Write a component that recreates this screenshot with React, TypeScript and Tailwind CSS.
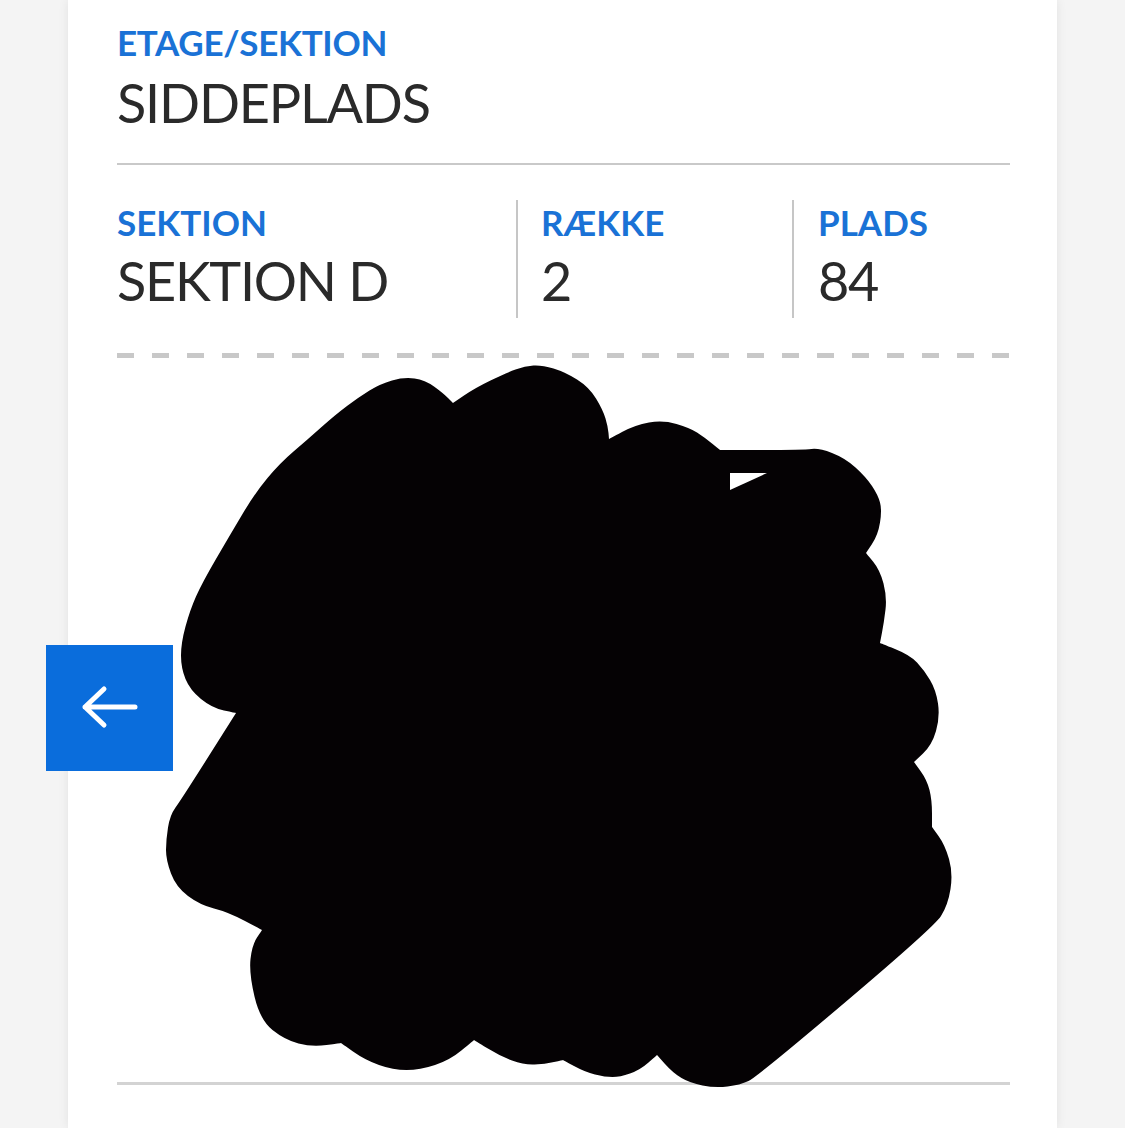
import { ReactNode } from 'react'

// outline of the marker scribble; sharp = notch between two strokes
type Pt = [number, number, boolean?]

const blob: Pt[] = [
  [181, 643], [190, 610], [202, 583], [230, 535], [255, 493], [280, 463], [307, 440], [335, 415],
  [359, 397], [380, 384], [404, 377], [425, 380], [443, 393], [453, 403, true],
  [475, 388], [506, 373], [525, 366], [542, 365], [565, 372], [589, 387], [603, 410], [608, 427], [609, 439, true],
  [635, 425], [663, 420], [690, 428], [704, 437], [720, 450, true],
  [804, 450], [819, 448], [845, 458], [866, 477], [878, 495], [882, 510], [878, 535], [866, 553, true],
  [880, 570], [887, 597], [884, 622], [880, 643, true],
  [910, 655], [924, 670], [936, 690], [940, 717], [932, 745], [914, 762, true],
  [927, 780], [932, 800], [932, 827, true],
  [945, 845], [953, 873], [948, 905], [934, 927],
  [757, 1077], [740, 1085], [715, 1088], [690, 1083], [673, 1073], [657, 1055, true],
  [640, 1070], [620, 1077], [605, 1077], [585, 1072], [563, 1060, true],
  [545, 1064], [524, 1065], [500, 1056], [474, 1040, true],
  [450, 1060], [420, 1070], [393, 1070], [365, 1060], [341, 1043, true],
  [312, 1047], [285, 1040], [260, 1020], [249, 973], [252, 945], [262, 930, true],
  [228, 912], [200, 905], [176, 887], [166, 860], [166, 840], [170, 815], [181, 800], [236, 713, true],
  [212, 708], [190, 690], [181, 668],
]

function smoothPath(pts: Pt[]) {
  const p: [number, number][] = []
  pts.forEach(([x, y, sharp]) => {
    p.push([x, y])
    if (sharp) p.push([x, y])
  })
  const mid = (a: [number, number], b: [number, number]) => `${(a[0] + b[0]) / 2},${(a[1] + b[1]) / 2}`
  let d = `M${mid(p[p.length - 1], p[0])}`
  p.forEach((pt, i) => {
    d += ` Q${pt[0]},${pt[1]} ${mid(pt, p[(i + 1) % p.length])}`
  })
  return d + 'Z'
}

const blobPath = smoothPath(blob)

function Field({ label, value }: { label: string; value: ReactNode }) {
  return (
    <>
      <p className="text-[35px] font-bold leading-none text-[#1a72d6]">{label}</p>
      <p className="mt-[14px] text-[54px] leading-none tracking-[-1.3px] text-[#2a2a2a]">{value}</p>
    </>
  )
}

export default function App() {
  return (
    <div className="relative h-[1128px] w-full overflow-hidden bg-[#f4f4f4] font-['Lato',sans-serif]">
      <div className="ml-[68px] h-full w-[989px] bg-white pl-[49px] pr-[47px] pt-[25px] shadow-[0_0_10px_rgba(0,0,0,0.08)]">
        <p className="text-[35px] font-bold leading-none tracking-[-0.3px] text-[#1a72d6]">ETAGE/SEKTION</p>
        <p className="mt-[16px] text-[54px] leading-none tracking-[-1.2px] text-[#2a2a2a]">SIDDEPLADS</p>
        <div className="mt-[33px] h-[2px] bg-[#c9c9c9]" />

        <div className="mt-[35px] flex">
          <div className="w-[399px] pb-[10px] pt-[5px]">
            <Field label="SEKTION" value="SEKTION D" />
          </div>
          <div className="w-[276px] border-l-2 border-[#c6c6c6] pb-[10px] pl-[23px] pt-[5px]">
            <Field label="RÆKKE" value="2" />
          </div>
          <div className="flex-1 border-l-2 border-[#c6c6c6] pb-[10px] pl-[24px] pt-[5px]">
            <Field label="PLADS" value="84" />
          </div>
        </div>

        <div className="mt-[35px] h-[5px] bg-[repeating-linear-gradient(90deg,#c8c8c8_0_17px,transparent_17px_35px)]" />

        <div className="relative h-[724px]">
          <svg
            className="absolute left-[-49px] top-0 z-10 overflow-visible"
            width={989}
            height={724}
            viewBox="68 358 989 724"
          >
            <path d={blobPath} fill="#050204" />
            <polygon points="730,473 767,473 730,490" fill="#fff" />
          </svg>
        </div>
        <div className="h-[3px] bg-[#d3d3d3]" />
      </div>

      <button className="absolute left-[46px] top-[645px] flex h-[126px] w-[127px] items-center justify-center bg-[#0a6ddc]">
        <svg width={127} height={126} viewBox="0 0 127 126" fill="none">
          <path
            d="M39 62H89M58 44L39 62L58 80"
            stroke="#fff"
            strokeWidth={5}
            strokeLinecap="round"
            strokeLinejoin="round"
          />
        </svg>
      </button>
    </div>
  )
}
